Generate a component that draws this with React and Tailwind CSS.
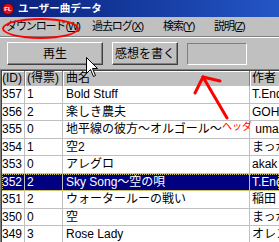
import React from 'react';

const rows = [
  { id: '357', votes: '1', title: 'Bold Stuff', author: 'T.Endo' },
  { id: '356', votes: '2', title: '楽しき農夫', author: 'GOH' },
  { id: '355', votes: '0', title: '地平線の彼方〜オルゴール〜', author: ' umakichi' },
  { id: '354', votes: '1', title: '空2', author: 'まっが' },
  { id: '353', votes: '0', title: 'アレグロ', author: 'akak' },
  { id: '352', votes: '2', title: 'Sky Song〜空の唄', author: 'T.Endo', selected: true },
  { id: '351', votes: '2', title: 'ウォータールーの戦い', author: '稲田' },
  { id: '350', votes: '0', title: '空', author: 'まっが' },
  { id: '349', votes: '3', title: 'Rose Lady', author: 'オレンジ' },
];

const font = "font-['Liberation_Sans','Noto_Sans_CJK_JP',sans-serif]";

const MenuItem = ({ label, letter, width }) => (
  <span className={`${width} whitespace-nowrap tracking-[-1.1px]`}>
    {label}(<span className="underline">{letter}</span>)
  </span>
);

const RaisedButton = ({ children, width }) => (
  <div
    className={`${width} h-[23px] flex items-center justify-center border border-t-white border-l-white border-r-[#404040] border-b-[#404040] shadow-[inset_-1px_-1px_#808080] text-[12px] text-black`}
  >
    {children}
  </div>
);

export default function App() {
  return (
    <div className={`relative w-[279px] h-[242px] overflow-hidden bg-[#c0c0c0] ${font}`}>
      {/* Title bar */}
      <div className="h-[17px] flex items-center bg-gradient-to-r from-[#0a1f7a] to-[#2456c6]">
        <div className="ml-[2px] w-[12px] h-[12px] rounded-full bg-[#e01010] border border-[#600000] flex items-center justify-center text-[6px] font-bold text-white leading-none">
          FL
        </div>
        <span className="ml-[4px] text-[10.5px] font-bold text-white leading-none">ユーザー曲データ</span>
      </div>

      {/* Menu bar */}
      <div className="h-[20px] flex items-center pl-[6px] text-[11px] text-black border-b border-[#808080]">
        <MenuItem label="ダウンロード" letter="W" width="w-[86px]" />
        <MenuItem label="過去ログ" letter="X" width="w-[71px]" />
        <MenuItem label="検索" letter="Y" width="w-[51px]" />
        <MenuItem label="説明" letter="Z" width="w-[50px]" />
      </div>

      {/* Toolbar */}
      <div className="h-[32px] flex items-start pt-[4px] pl-[7px] gap-[9px] border-t border-white">
        <RaisedButton width="w-[96px]">再生</RaisedButton>
        <RaisedButton width="w-[66px]">感想を書く</RaisedButton>
        <div className="mt-[1px] w-[60px] h-[22px] border border-t-[#808080] border-l-[#808080] border-r-white border-b-white" />
      </div>

      {/* List */}
      <div className="border-t border-l border-[#808080]">
        <div className="border-t border-l border-[#404040] bg-white text-[12px] text-black">
          <div className="h-[15px] flex bg-[#c0c0c0] leading-[15px]">
            <div className="w-[23px] border-r border-r-[#808080] shadow-[inset_1px_1px_#fff] whitespace-nowrap">(ID)</div>
            <div className="w-[38px] pl-[2px] border-r border-r-[#808080] shadow-[inset_1px_1px_#fff] whitespace-nowrap">(得票)</div>
            <div className="w-[187px] pl-[3px] border-r border-r-[#808080] shadow-[inset_1px_1px_#fff] whitespace-nowrap">曲名</div>
            <div className="flex-1 pl-[2px] shadow-[inset_1px_1px_#fff] whitespace-nowrap overflow-hidden">作者</div>
          </div>
          {rows.map((r) => (
            <div
              key={r.id}
              className={`h-[17.5px] flex items-center border-b border-[#c0c0c0] leading-none whitespace-nowrap ${
                r.selected ? 'bg-[#000080] text-white outline-1 outline-dotted outline-[#c8c060] -outline-offset-1' : ''
              }`}
            >
              <div className="w-[23px] h-full flex items-center border-r border-[#c0c0c0]">{r.id}</div>
              <div className="w-[38px] h-full flex items-center pl-[2px] border-r border-[#c0c0c0]">{r.votes}</div>
              <div className="w-[187px] h-full flex items-center pl-[3px] border-r border-[#c0c0c0] overflow-hidden">{r.title}</div>
              <div className="flex-1 h-full flex items-center pl-[2px] overflow-hidden whitespace-pre">{r.author}</div>
            </div>
          ))}
        </div>
      </div>

      {/* Annotations */}
      <div className="absolute left-[2px] top-[18px] w-[77px] h-[21px] rounded-[50%] border-2 border-[#ff0000]" />
      <svg className="absolute left-0 top-0" width="279" height="242" viewBox="0 0 279 242">
        <g stroke="#ff0000" strokeWidth="3" strokeLinecap="round" fill="none">
          <line x1="203" y1="77" x2="227" y2="118" />
          <line x1="203" y1="77" x2="195" y2="93" />
          <line x1="203" y1="77" x2="220" y2="81" />
        </g>
      </svg>
      <span className="absolute left-[222px] top-[122px] text-[10px] leading-none text-[#ff0000]">ヘッダ</span>

      {/* Mouse cursor */}
      <svg className="absolute left-[86px] top-[57px]" width="13" height="21" viewBox="0 0 13 21">
        <path d="M0.5 0.5 L0.5 16.5 L4.5 12.5 L7.5 19.5 L9.5 18.5 L6.5 11.5 L11.5 11.5 Z" fill="#fff" stroke="#000" strokeWidth="1" />
      </svg>
    </div>
  );
}
